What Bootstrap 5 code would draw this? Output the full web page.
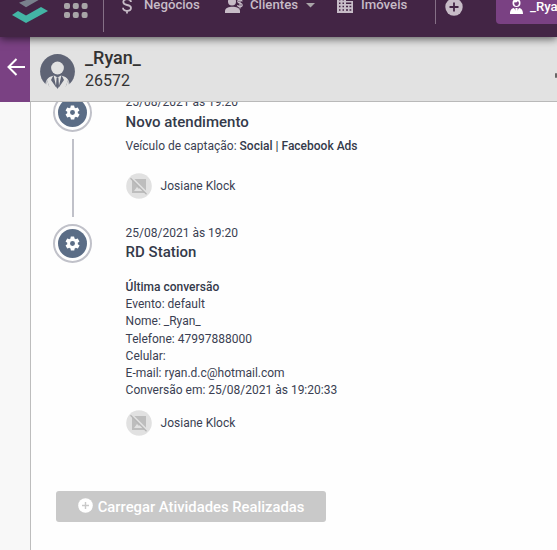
<!DOCTYPE html>
<html lang="pt-br">
<head>
<meta charset="utf-8">
<meta name="viewport" content="width=device-width, initial-scale=1">
<title>Atendimento</title>
<link href="https://cdn.jsdelivr.net/npm/bootstrap@5.3.0/dist/css/bootstrap.min.css" rel="stylesheet">
<style>
body{font-family:Roboto,sans-serif;font-size:12px;line-height:17.2px;color:#3a3f52;height:550px;background:#fefefe}
svg{display:block;flex:none}
.topbar{height:64px;margin-top:-27px;background:#432545;color:#c7bcc7;font-size:13.2px;font-weight:500;box-shadow:0 2px 8px rgba(0,0,0,.6);z-index:2;flex:none}
.topbar span{line-height:18px;margin-top:-1px;flex:none}
.logo{margin-left:11px}
.apps{margin-left:15px}
.sep{width:1px;background:#857086;flex:none}
.sep-a{height:54px;margin-left:15px}
.sep-b{height:38px;margin-left:28px}
.tab-user{width:61px;height:38px;margin-left:33px;padding-left:13px;background:#7a4183;color:#fff;border-radius:4px 0 0 4px;overflow:hidden;flex:none}
.rail{width:30px;background:#f8f8f8;flex:none}
.back{height:65px;background:#7a4183}
.client{height:65px;background:#e2e2e2;border-bottom:1px solid #b9b9b9;padding-left:10px}
.client-name{font-size:18px;line-height:22px;color:#333;font-weight:500}
.client-id{font-size:16px;line-height:22px;color:#333;margin-top:1px}
.feed{border-left:1px solid #bdbdbd;min-height:0}
.entry{margin-left:22px}
.entry:first-child{height:131px;margin-top:-9px}
.marker{width:39px;margin-right:33.6px;flex:none}
.ring{width:39px;height:39px;border:2px solid #c0c1c9;border-radius:50%;flex:none}
.disc{width:29px;height:29px;border-radius:50%;background:#5b6d86}
.stem{width:2px;height:78px;margin-top:7px;background:#c0c1c9}
.when{line-height:18px}
.entry-title{font-size:15px;line-height:22px;font-weight:500;color:#343a4a}
.entry b{font-weight:500;color:#343a4a}
.owner{height:26px;gap:9px}
.load{width:270px;height:31px;margin:55px 0 0 25px;background:#c9c9c9;color:#fff;border-radius:3px;font-size:14.8px;font-weight:500;line-height:20px}
</style>
<script src="https://cdn.jsdelivr.net/npm/bootstrap@5.3.0/dist/js/bootstrap.bundle.min.js"></script>
</head>
<body class="overflow-hidden">
<svg width="0" height="0" class="position-absolute">
<symbol id="gear" viewBox="0 0 24 24"><path d="M19.4 13c0-.3.1-.6.1-1s0-.7-.1-1l2.1-1.600a.5.5 0 0 0 .1-.6l-2-3.500a.5.5 0 0 0-.6-.2l-2.500 1a7 7 0 0 0-1.700-1l-.4-2.600a.5.5 0 0 0-.5-.5h-4a.5.5 0 0 0-.5.5L9.200 5.100a7 7 0 0 0-1.700 1L5 5.100a.5.5 0 0 0-.6.2l-2 3.500a.5.5 0 0 0 .1.600L4.600 11a7 7 0 0 0 0 2l-2.100 1.600a.5.5 0 0 0-.1.600l2 3.500c.1.200.4.300.6.200l2.500-1a7 7 0 0 0 1.700 1l.4 2.600c0 .3.200.5.5.5h4c.3 0 .5-.2.5-.5l.4-2.600a7 7 0 0 0 1.700-1l2.500 1c.2.100.5 0 .6-.2l2-3.500a.5.5 0 0 0-.1-.600zM12 15.500a3.500 3.500 0 1 1 0-7 3.500 3.500 0 0 1 0 7z" fill="#fff"/></symbol>
<symbol id="nophoto" viewBox="0 0 26 26"><circle cx="13" cy="13" r="12.800" fill="#e1e1e1"/><path d="M6 6h14v14H6z" fill="#bdbdbd"/><path d="M8 18l3-4 2 2 2-3 3 5z" fill="#e1e1e1"/><path d="M5.500 4.500L21.500 20.500" stroke="#e1e1e1" stroke-width="2"/><path d="M4.500 5.300L20.500 21.300" stroke="#b5b5b5" stroke-width="1.300"/></symbol>
</svg>
<div class="d-flex flex-column h-100">
<nav class="topbar d-flex align-items-center position-relative">
  <svg class="logo" width="38" height="36" viewBox="0 0 38 36"><path d="M8 15.700l7 4.500 14-8V8z" fill="#79808c"/><path d="M1 28l6-4 8 4.500L30 20l7 4-22 12z" fill="#43b5a5"/></svg>
  <svg class="apps" width="24" height="40" viewBox="0 0 24 40" fill="#a9a5a8"><g id="dots"><rect y="9" width="6" height="6" rx="2"/><rect x="8.800" y="9" width="6" height="6" rx="2"/><rect x="17.600" y="9" width="6" height="6" rx="2"/></g><use href="#dots" y="9"/><use href="#dots" y="18"/></svg>
  <div class="sep sep-a"></div>
  <svg style="margin-left:18px" width="10" height="18" viewBox="0 0 10 18" fill="none" stroke="#c7bcc7" stroke-width="1.800"><path d="M9 6C8.800 4.300 7.200 3.200 5 3.200S1.300 4.300 1.300 6 2.500 8.500 5 9s4 1.300 4 3-1.700 2.800-4 2.800S1 13.700 1 11.800M5 .5V3M5 15v2.500"/></svg>
  <span style="margin-left:12px;width:56px">Negócios</span>
  <svg style="margin-left:25px;margin-top:-1px" width="18" height="16" viewBox="0 0 18 16"><circle cx="7" cy="4.500" r="4" fill="#c7bcc7"/><path d="M0 16v-2c0-3 4-4.200 7.500-4.200S15 11 15 14v2z" fill="#c7bcc7"/><path d="M17 4.500c0-1-.8-1.600-2.200-1.600s-2 .6-2 1.600 1 1.400 2.200 1.700 2.200.8 2.200 1.800-.9 1.700-2.200 1.700-2.300-.7-2.300-1.700M15 1.500v10" fill="none" stroke="#c7bcc7" stroke-width="1.200"/></svg>
  <span style="margin-left:7px;width:47px">Clientes</span>
  <svg style="margin-left:9px" width="9" height="5" viewBox="0 0 9 5"><path d="M0 0h9L4.500 4.600z" fill="#a9a5a8"/></svg>
  <svg style="margin-left:22px" width="16" height="16" viewBox="0 0 16 16"><path fill="#c7bcc7" fill-rule="evenodd" d="M0 0h9v4h7v12H0zM2 2h1.500v1.500H2zM5.500 2H7v1.500H5.500zM2 5.400h1.500v1.500H2zM5.500 5.400H7v1.500H5.500zM2 8.800h1.500v1.500H2zM5.500 8.800H7v1.500H5.500zM2 12.300h1.500v1.500H2zM5.500 12.300H7v1.500H5.500zM9 5.600h5.300v1.500H9zM9 8.800h2v1.500H9zM12.500 8.800h1.800v1.500h-1.800zM9 12.300h2v1.500H9zM12.500 12.300h1.800v1.500h-1.800z"/></svg>
  <span style="margin-left:8px;width:46px">Imóveis</span>
  <div class="sep sep-b"></div>
  <svg style="margin-left:9px;margin-top:3px" width="18" height="18" viewBox="0 0 18 18"><circle cx="9" cy="9" r="8.700" fill="#c7bcc7"/><path d="M9 4.500v9M4.500 9h9" stroke="#432545" stroke-width="1.800"/></svg>
  <div class="tab-user d-flex align-items-center"><svg style="margin-top:2px" width="15" height="16" viewBox="0 0 15 16"><circle cx="7.500" cy="5" r="4" fill="#fff"/><path d="M5 4.500q3 .2 4-1.500l1 2Q9.500 8 7.500 8T5 4.500z" fill="#7a4183"/><path d="M1 16c0-4 1.500-5.500 4-6l2.500 4L10 10c2.500.5 4 2 4 6z" fill="#fff"/><path d="M6.500 10h2l.5 5h-3z" fill="#fff"/></svg><span style="margin:3px 0 0 6px">_Ryan_</span></div>
</nav>
<div class="d-flex flex-grow-1 overflow-hidden">
  <aside class="rail">
    <div class="back d-flex align-items-center justify-content-center"><svg width="18" height="18" viewBox="0 0 18 18" style="margin:-6px 0 0 1px" fill="none" stroke="#fff" stroke-width="2"><path d="M18 9H2M9.500 1L1.500 9l8 8"/></svg></div>
  </aside>
  <main class="d-flex flex-column flex-grow-1">
    <header class="client d-flex align-items-center">
      <svg width="35" height="35" viewBox="0 0 35 35" class="mt-1"><defs><clipPath id="face"><path d="M0 0h35v26q-2 3-6 5l-1-5-3 9H10l-3-9-1 5q-4-2-6-5z"/></clipPath></defs><g clip-path="url(#face)"><circle cx="17.500" cy="17.500" r="17.400" fill="#5f6475"/><circle cx="17.500" cy="14" r="6.400" fill="#e2e2e2"/><path d="M5 35c0-8 2-12 9-13.500l3.500 2 3.500-2c7 1.500 9 5.500 9 13.500z" fill="#e2e2e2"/><path d="M13.500 21l3 13L11 26zM21.500 21l-3 13L24 26zM16.600 23.500h1.800L19 32l-1.500 3-1.500-3z" fill="#5f6475"/></g></svg>
      <div style="margin-left:10px"><div class="client-name">_Ryan_</div><div class="client-id">26572</div></div>
      <svg class="ms-auto" style="margin-top:13px" width="2" height="5"><rect width="2" height="5" rx="1" fill="#666"/></svg>
    </header>
    <section class="feed flex-grow-1 overflow-hidden">
      <article class="entry d-flex">
        <div class="marker d-flex flex-column align-items-center"><div class="ring d-flex align-items-center justify-content-center"><div class="disc d-flex align-items-center justify-content-center"><svg width="17" height="17"><use href="#gear"/></svg></div></div><div class="stem"></div></div>
        <div>
          <div class="when">25/08/2021 às 19:20</div>
          <div class="entry-title">Novo atendimento</div>
          <div style="margin-top:5px">Veículo de captação: <b>Social | Facebook Ads</b></div>
          <div class="owner d-flex align-items-center" style="margin-top:18px"><svg width="26" height="26"><use href="#nophoto"/></svg>Josiane Klock</div>
        </div>
      </article>
      <article class="entry d-flex">
        <div class="marker"><div class="ring d-flex align-items-center justify-content-center"><div class="disc d-flex align-items-center justify-content-center"><svg width="17" height="17"><use href="#gear"/></svg></div></div></div>
        <div>
          <div class="when">25/08/2021 às 19:20</div>
          <div class="entry-title" style="margin-top:-1px">RD Station</div>
          <div style="margin-top:16px"><b>Última conversão</b><br>Evento: default<br>Nome: _Ryan_<br>Telefone: 47997888000<br>Celular:<br>E-mail: ryan.d.c@hotmail.com<br>Conversão em: 25/08/2021 às 19:20:33</div>
          <div class="owner d-flex align-items-center" style="margin-top:11px"><svg width="26" height="26"><use href="#nophoto"/></svg>Josiane Klock</div>
        </div>
      </article>
      <button class="load border-0 p-0 d-flex align-items-center justify-content-center"><svg width="15" height="15" viewBox="0 0 15 15" style="margin:-2px 5px 0 0"><circle cx="7.500" cy="7.500" r="7.300" fill="#fff"/><path d="M7.500 4v7M4 7.500h7" stroke="#c9c9c9" stroke-width="1.400"/></svg>Carregar Atividades Realizadas</button>
    </section>
  </main>
</div>
</div>
</body>
</html>
